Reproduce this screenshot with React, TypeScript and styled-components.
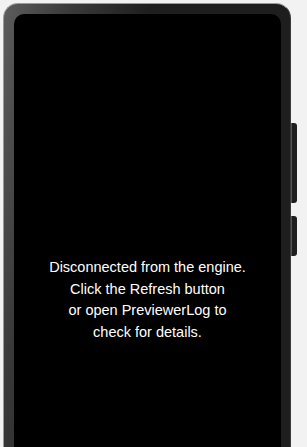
import React from 'react';
import styled, { createGlobalStyle } from 'styled-components';

const GlobalStyle = createGlobalStyle`
    html, body {
        margin: 0;
        padding: 0;
        background-color: #f2f2f2;
        overflow: hidden;
    }
`;

const Page = styled.div`
    display: flex;
    align-items: flex-start;
    padding: 3px 0 0 3px;
    height: 447px;
    box-sizing: border-box;
    overflow: hidden;
`;

const Frame = styled.div`
    box-sizing: border-box;
    width: 288px;
    height: 470px;
    flex-shrink: 0;
    padding: 10px 9px 10px 10px;
    border-radius: 15px;
    border: 1px solid #9a9a9a;
    border-right-color: #3a3a3a;
    background: linear-gradient(100deg, #5c5c5c 0%, #3a3a3a 18%, #1e1e1e 40%, #1e1e1e 100%);
    display: flex;
`;

const Screen = styled.div`
    flex: 1;
    background-color: #000;
    border-radius: 10px;
    display: flex;
    flex-direction: column;
    align-items: center;
    padding-top: 243px;
`;

const Message = styled.p`
    margin: 0;
    color: #fff;
    font-family: "Liberation Sans", Arial, sans-serif;
    font-size: 14.5px;
    line-height: 21.5px;
    text-align: center;
`;

const ButtonRail = styled.div`
    display: flex;
    flex-direction: column;
    padding-top: 120px;
    gap: 13px;
`;

const SideButton = styled.div<{ length: number }>`
    width: 6px;
    height: ${({ length }) => length}px;
    background-color: #1e1e1e;
    border-left: 1px solid #555;
    box-sizing: border-box;
    border-radius: 0 3px 3px 0;
`;

export default function App() {
    return (
        <>
            <GlobalStyle />
            <Page>
                <Frame>
                    <Screen>
                        <Message>
                            Disconnected from the engine.<br />
                            Click the Refresh button<br />
                            or open PreviewerLog to<br />
                            check for details.
                        </Message>
                    </Screen>
                </Frame>
                <ButtonRail>
                    <SideButton length={80} />
                    <SideButton length={40} />
                </ButtonRail>
            </Page>
        </>
    );
}
